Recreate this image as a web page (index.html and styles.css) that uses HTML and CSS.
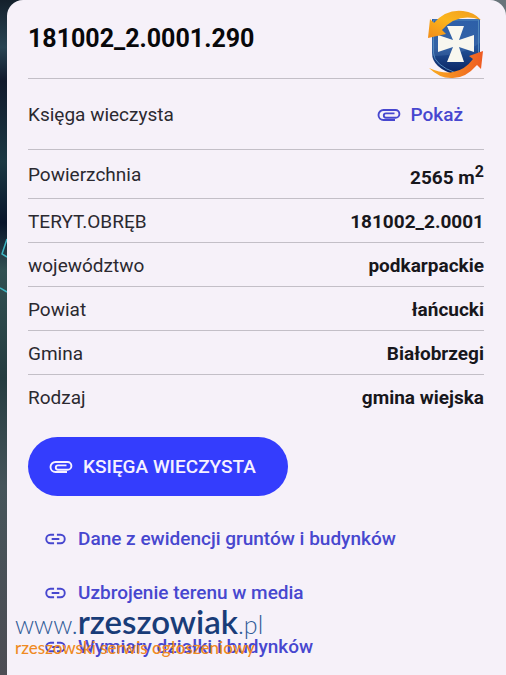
FILE: index.html
```html
<!DOCTYPE html>
<html lang="pl">
<head>
<meta charset="utf-8">
<meta name="viewport" content="width=device-width, initial-scale=1">
<title>181002_2.0001.290</title>
<link rel="stylesheet" href="styles.css">
</head>
<body>
<svg class="map" viewBox="0 0 506 675" preserveAspectRatio="none" aria-hidden="true">
  <defs>
    <linearGradient id="ground" x1="0" y1="0" x2="0" y2="1">
      <stop offset="0" stop-color="#14202c"/><stop offset=".07" stop-color="#294453"/>
      <stop offset=".12" stop-color="#111a2c"/><stop offset=".24" stop-color="#1c3944"/>
      <stop offset=".33" stop-color="#09152a"/><stop offset=".4" stop-color="#315052"/>
      <stop offset=".56" stop-color="#253c40"/><stop offset=".72" stop-color="#45545a"/>
      <stop offset="1" stop-color="#4d4d54"/>
    </linearGradient>
  </defs>
  <rect width="506" height="675" fill="url(#ground)"/>
  <rect x="480" width="26" height="30" fill="#68747a"/>
  <path d="M7 239 2 254l5 3M0 288l7 4" fill="none" stroke="#3fb5c2" stroke-width="1.5"/>
</svg>
<svg class="symbols" aria-hidden="true">
  <symbol id="clip" viewBox="0 0 24 12">
    <path d="M18 11H6.500a5 5 0 0 1 0-10H18.500a3.900 3.900 0 0 1 0 7.800H9a2.200 2.200 0 0 1 0-4.400H17.500" fill="none" stroke="currentColor" stroke-width="1.900"/>
  </symbol>
  <symbol id="link" viewBox="0 0 22 12">
    <path d="M9.500 1.600H5.700a4.400 4.400 0 0 0 0 8.800H9.500M12.500 1.600H16.300a4.400 4.400 0 0 1 0 8.800H12.500M7 6H15" fill="none" stroke="currentColor" stroke-width="2"/>
  </symbol>
</svg>
<main class="card">
  <header class="head">
    <h1>181002_2.0001.290</h1>
    <svg class="crest" viewBox="0 0 58 72" role="img" aria-label="Herb">
      <defs>
        <linearGradient id="blue" x1="0" y1="0" x2="0" y2="1"><stop offset="0" stop-color="#194f9e"/><stop offset=".5" stop-color="#24549a"/><stop offset="1" stop-color="#071f5c"/></linearGradient>
        <linearGradient id="gold" x1="0" y1="1" x2="1" y2="0"><stop offset="0" stop-color="#f28c18"/><stop offset=".5" stop-color="#fbb51c"/><stop offset="1" stop-color="#ef9b20"/></linearGradient>
        <linearGradient id="orange"><stop offset="0" stop-color="#f9ae20"/><stop offset="1" stop-color="#ee5a23"/></linearGradient>
      </defs>
      <path d="M5 10H53V44Q53 59 29 66Q5 59 5 44Z" fill="url(#blue)"/>
      <path d="M5 47Q34 47 53 34V10H5Z" fill="#86addb" opacity=".18"/>
      <path d="M6.500 11H51.500V44Q51 56 29 64Q7 56 6.500 44Z" fill="none" stroke="#5289bd" stroke-width="1"/>
      <path d="M20 17H37L32 31 47 26V43L32 38 37 53H20L26 38 11 43V26L26 31Z" fill="#f8f7ef"/>
      <path d="M1 29 3 10 7 14Q19 0 36 2Q47 3 54 11Q31 3 15 21L19 25Z" fill="url(#gold)"/>
      <path d="M2 59Q16 65 26 63Q38 61 46 50L42 47 56 42 54 60 50 56Q38 70 24 69Q12 69 2 59Z" fill="url(#orange)"/>
    </svg>
  </header>
  <table class="facts">
    <tbody>
      <tr class="book"><th scope="row">Księga wieczysta</th><td><a class="show" href="#"><svg class="clip" aria-hidden="true"><use href="#clip"/></svg>Pokaż</a></td></tr>
      <tr class="area"><th scope="row">Powierzchnia</th><td>2565 m<sup>2</sup></td></tr>
      <tr><th scope="row">TERYT.OBRĘB</th><td>181002_2.0001</td></tr>
      <tr><th scope="row">województwo</th><td>podkarpackie</td></tr>
      <tr><th scope="row">Powiat</th><td>łańcucki</td></tr>
      <tr><th scope="row">Gmina</th><td>Białobrzegi</td></tr>
      <tr><th scope="row">Rodzaj</th><td>gmina wiejska</td></tr>
    </tbody>
  </table>
  <button class="primary" type="button"><svg class="clip" aria-hidden="true"><use href="#clip"/></svg>KSIĘGA WIECZYSTA</button>
  <nav class="links">
    <a href="#"><svg class="chain" aria-hidden="true"><use href="#link"/></svg>Dane z ewidencji gruntów i budynków</a>
    <a href="#"><svg class="chain" aria-hidden="true"><use href="#link"/></svg>Uzbrojenie terenu w media</a>
    <a href="#"><svg class="chain" aria-hidden="true"><use href="#link"/></svg>Wymiary działki i budynków</a>
  </nav>
</main>
<div class="watermark">
  <div class="site">www.<b>rzeszowiak</b>.pl</div>
  <div class="slogan">rzeszowski serwis ogłoszeniowy</div>
</div>
</body>
</html>
```

FILE: styles.css
```css
* { box-sizing: border-box; }
html, body { height: 100%; }
body {
  position: relative;
  margin: 0;
  overflow: hidden;
  background: #26343c;
  color: #2b2930;
  font: 400 19px/24px Roboto, sans-serif;
}
.map { position: absolute; inset: 0; width: 100%; height: 100%; }
.symbols { position: absolute; width: 0; height: 0; }
.card {
  position: relative;
  min-height: 100%;
  margin-left: 7px;
  padding: 0 22px 0 21px;
  border-radius: 16px 16px 0 0;
  background: #f6f1f9;
}
.head {
  display: flex;
  align-items: center;
  justify-content: space-between;
  height: 79px;
  border-bottom: 1px solid #c3bfc7;
}
h1 { margin: 0; color: #08080a; font-size: 25px; font-weight: 700; line-height: 32px; }
.crest { width: 58px; height: 72px; margin: 12px -1px 0 0; }
.facts { width: 100%; border-collapse: collapse; }
tr { height: 44px; border-bottom: 1px solid #c3bfc7; }
tr:last-child { border-bottom: 0; }
.book { height: 70px; }
.area { height: 49px; }
th, td { padding: 3px 0 0; vertical-align: middle; white-space: nowrap; }
th { text-align: left; font-weight: 400; }
td { color: #18171c; text-align: right; font-weight: 700; }
.area td { padding-top: 8px; }
sup { font-size: 16px; line-height: 0; }
a { color: #4747cf; font-weight: 500; text-decoration: none; }
.show { display: inline-flex; align-items: center; gap: 10px; margin-right: 21px; }
.clip { width: 24px; height: 12px; }
.primary {
  display: flex;
  align-items: center;
  gap: 10px;
  height: 59px;
  margin-top: 19px;
  padding: 0 32px 0 21px;
  border: 0;
  border-radius: 30px;
  background: #343dfd;
  color: #f6f1ff;
  font: 500 19px/24px Roboto, sans-serif;
}
.links { display: flex; flex-direction: column; gap: 30px; padding: 31px 0 0 17px; }
.links a { display: flex; align-items: center; gap: 12px; }
.chain { width: 21px; height: 12px; }
.watermark { position: absolute; left: 15px; bottom: 18px; pointer-events: none; white-space: nowrap; }
.site { color: #315c98; font: 300 25px/30px Lato, sans-serif; }
.site b { color: #193c78; font-size: 33px; font-weight: 600; }
.slogan { color: #ef8a23; font: 500 17px/18px Lato, sans-serif; }
```
